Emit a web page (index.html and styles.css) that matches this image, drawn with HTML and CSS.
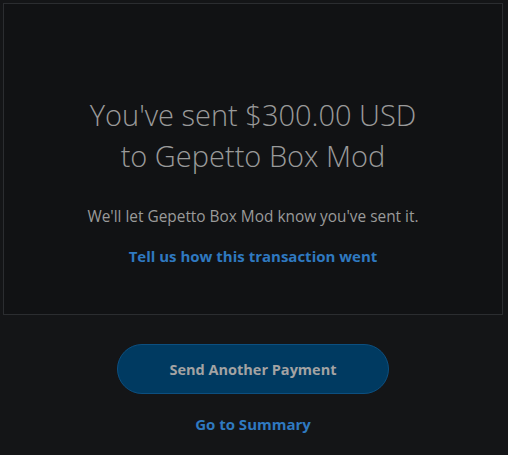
FILE: index.html
```html
<!DOCTYPE html>
<html>

<head>
    <meta name="viewport" content="width=device-width, initial-scale=1.0">
    <title>Payment sent</title>
    <link rel="stylesheet" href="styles.css">
</head>

<body>
    <div id="page">
        <div class="card">
            <h1 class="title">You've sent $300.00 USD<br>to Gepetto Box Mod</h1>
            <p class="note">We'll let Gepetto Box Mod know you've sent it.</p>
            <a class="link" href="#">Tell us how this transaction went</a>
        </div>
        <div class="actions">
            <button class="btn-primary">Send Another Payment</button>
            <a class="link" href="#">Go to Summary</a>
        </div>
    </div>
</body>

</html>
```

FILE: styles.css
```css
body {
    margin: 0;
    font-family: "Open Sans", "Noto Sans", sans-serif;
    background: #141517;
    color: #9b9b9b;
}

#page {
    padding: 3px 5px 0 3px;
}

/* 结果卡片 */
.card {
    height: 312px;
    border: 1px solid #2b2d30;
    background: #111214;
    display: flex;
    flex-direction: column;
    align-items: center;
    justify-content: center;
    text-align: center;
    padding-top: 42px;
    box-sizing: border-box;
}

.title {
    margin: 0;
    font-weight: 300;
    font-size: 29px;
    line-height: 41px;
    color: #9a9a9a;
}

.note {
    margin: 30px 0 0;
    font-size: 15.4px;
    color: #9a9a9a;
}

.link {
    color: #2f79c0;
    font-weight: bold;
    font-size: 15px;
    text-decoration: none;
}

.card .link {
    margin-top: 19px;
}

/* 底部操作 */
.actions {
    display: flex;
    flex-direction: column;
    align-items: center;
    padding-top: 29px;
}

.btn-primary {
    width: 272px;
    height: 50px;
    border-radius: 25px;
    border: 1px solid #0c4f80;
    background: #003a61;
    color: #a3a3a3;
    font-family: inherit;
    font-weight: bold;
    font-size: 14.5px;
    cursor: pointer;
}

.actions .link {
    margin-top: 20px;
}
```
